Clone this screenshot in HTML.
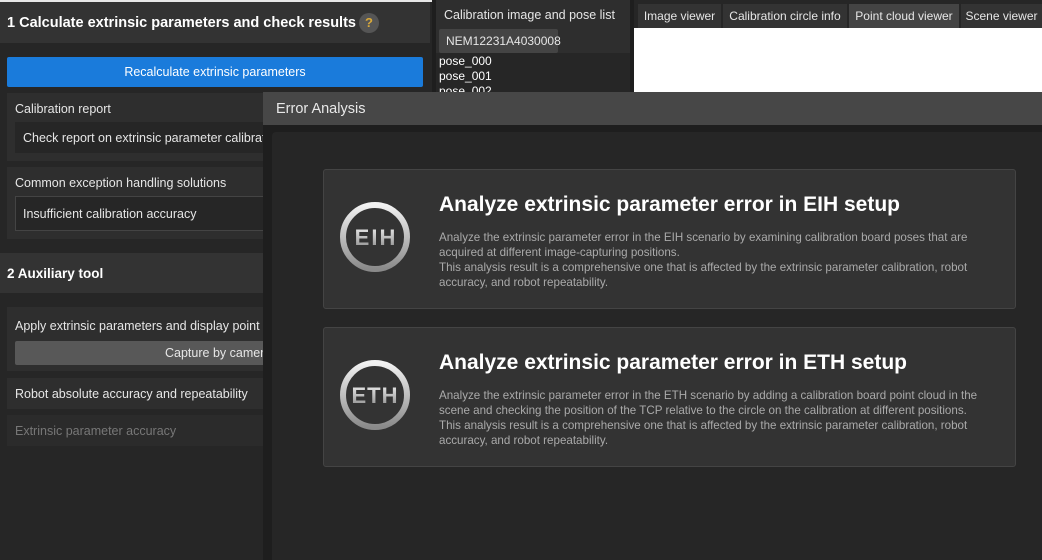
<!DOCTYPE html>
<html><head><meta charset="utf-8"><style>
*{box-sizing:border-box;margin:0;padding:0}
body{width:1042px;height:560px;background:#262626;font-family:"Liberation Sans",sans-serif;position:relative;overflow:hidden;color:#e6e6e6}
.a{position:absolute}
.t{font-size:12.5px;white-space:nowrap}
.d{font-size:11.6px;line-height:15px;color:#aaa;width:575px}
</style></head><body>
<div class="a" style="left:0;top:0;width:432px;height:2px;background:#e8e8e8"></div>
<div class="a" style="left:0;top:2px;width:430px;height:41px;background:#333"></div>
<div class="a" style="left:7px;top:15px;font-size:14.5px;font-weight:bold;color:#fff">1 Calculate extrinsic parameters and check results</div>
<div class="a" style="left:359px;top:13px;width:20px;height:20px;border-radius:50%;background:#555;color:#d9a93a;font-size:13px;text-align:center;line-height:20px;font-weight:bold">?</div>
<div class="a" style="left:7px;top:57px;width:416px;height:30px;background:#1a7bdb;border-radius:2px;color:#fff;font-size:12.5px;text-align:center;line-height:30px">Recalculate extrinsic parameters</div>
<div class="a" style="left:7px;top:93px;width:420px;height:68px;background:#2e2e2e"></div>
<div class="a t" style="left:15px;top:102px">Calibration report</div>
<div class="a" style="left:15px;top:122px;width:410px;height:31px;background:#262626"></div>
<div class="a t" style="left:23px;top:131px">Check report on extrinsic parameter calibration</div>
<div class="a" style="left:7px;top:167px;width:420px;height:72px;background:#2e2e2e"></div>
<div class="a t" style="left:15px;top:176px">Common exception handling solutions</div>
<div class="a" style="left:15px;top:196px;width:410px;height:35px;background:#262626;border:1px solid #444"></div>
<div class="a t" style="left:23px;top:207px">Insufficient calibration accuracy</div>
<div class="a" style="left:0;top:253px;width:430px;height:40px;background:#333"></div>
<div class="a" style="left:7px;top:266px;font-size:13.5px;font-weight:bold;color:#fff">2 Auxiliary tool</div>
<div class="a" style="left:7px;top:307px;width:420px;height:64px;background:#2e2e2e"></div>
<div class="a t" style="left:15px;top:319px">Apply extrinsic parameters and display point cloud</div>
<div class="a" style="left:15px;top:341px;width:410px;height:24px;background:#585858;border-radius:2px"></div>
<div class="a t" style="left:165px;top:346px">Capture by camera</div>
<div class="a" style="left:7px;top:378px;width:420px;height:31px;background:#2e2e2e"></div>
<div class="a t" style="left:15px;top:387px">Robot absolute accuracy and repeatability</div>
<div class="a" style="left:7px;top:415px;width:420px;height:31px;background:#2b2b2b"></div>
<div class="a t" style="left:15px;top:424px;color:#777">Extrinsic parameter accuracy</div>
<div class="a" style="left:432px;top:0;width:4px;height:92px;background:#1e1e1e"></div>
<div class="a" style="left:436px;top:0;width:194px;height:53px;background:#2e2e2e"></div>
<div class="a t" style="left:444px;top:8px">Calibration image and pose list</div>
<div class="a" style="left:439px;top:29px;width:119px;height:24px;background:#444;border-radius:2px"></div>
<div class="a t" style="left:446px;top:34px;font-size:12px">NEM12231A4030008</div>
<div class="a" style="left:436px;top:53px;width:194px;height:40px;background:#262626"></div>
<div class="a" style="left:439px;top:54px;font-size:12px;line-height:15px;color:#fff">pose_000<br>pose_001<br>pose_002</div>
<div class="a" style="left:630px;top:0;width:4px;height:92px;background:#1e1e1e"></div>
<div class="a" style="left:634px;top:0;width:408px;height:28px;background:#262626"></div>
<div class="a t" style="left:638px;top:4px;width:83px;height:24px;background:#333;line-height:24px;text-align:center;font-size:12px">Image viewer</div>
<div class="a t" style="left:723px;top:4px;width:124px;height:24px;background:#333;line-height:24px;text-align:center;font-size:12px">Calibration circle info</div>
<div class="a t" style="left:849px;top:4px;width:110px;height:24px;background:#444;line-height:24px;text-align:center;font-size:12px">Point cloud viewer</div>
<div class="a t" style="left:961px;top:4px;width:81px;height:24px;background:#333;line-height:24px;text-align:center;font-size:12px">Scene viewer</div>
<div class="a" style="left:634px;top:28px;width:408px;height:64px;background:#fff"></div>
<div class="a" style="left:263px;top:92px;width:779px;height:468px;background:#1e1e1e"></div>
<div class="a" style="left:263px;top:92px;width:779px;height:33px;background:#474747"></div>
<div class="a" style="left:276px;top:101px;font-size:14.5px;color:#e8e8e8">Error Analysis</div>
<div class="a" style="left:272px;top:132px;width:770px;height:428px;background:#262626;border-radius:4px 0 0 0"></div>
<svg width="0" height="0" style="position:absolute"><defs><linearGradient id="g" x1="0" y1="0" x2="0" y2="1"><stop offset="0" stop-color="#f2f2f2"/><stop offset="1" stop-color="#8a8a8a"/></linearGradient></defs></svg>
<div class="a" style="left:323px;top:169px;width:693px;height:140px;background:#333;border:1px solid #444;border-radius:3px"></div>
<svg class="a" style="left:338px;top:200px" width="74" height="74" viewBox="0 0 74 74">
<circle cx="37" cy="37" r="32" fill="none" stroke="url(#g)" stroke-width="6"/>
<text x="38" y="45" text-anchor="middle" font-family="Liberation Sans" font-weight="bold" font-size="22" fill="url(#g)" letter-spacing="2">EIH</text></svg>
<div class="a" style="left:439px;top:193px;font-size:21px;font-weight:bold;color:#fff">Analyze extrinsic parameter error in EIH setup</div>
<div class="a d" style="left:439px;top:230px">Analyze the extrinsic parameter error in the EIH scenario by examining calibration board poses that are acquired at different image-capturing positions.<br>This analysis result is a comprehensive one that is affected by the extrinsic parameter calibration, robot accuracy, and robot repeatability.</div>
<div class="a" style="left:323px;top:327px;width:693px;height:140px;background:#333;border:1px solid #444;border-radius:3px"></div>
<svg class="a" style="left:338px;top:358px" width="74" height="74" viewBox="0 0 74 74">
<circle cx="37" cy="37" r="32" fill="none" stroke="url(#g)" stroke-width="6"/>
<text x="37" y="45" text-anchor="middle" font-family="Liberation Sans" font-weight="bold" font-size="22" fill="url(#g)" letter-spacing="1">ETH</text></svg>
<div class="a" style="left:439px;top:351px;font-size:21px;font-weight:bold;color:#fff">Analyze extrinsic parameter error in ETH setup</div>
<div class="a d" style="left:439px;top:388px;width:555px">Analyze the extrinsic parameter error in the ETH scenario by adding a calibration board point cloud in the scene and checking the position of the TCP relative to the circle on the calibration at different positions.<br>This analysis result is a comprehensive one that is affected by the extrinsic parameter calibration, robot accuracy, and robot repeatability.</div>
</body></html>
